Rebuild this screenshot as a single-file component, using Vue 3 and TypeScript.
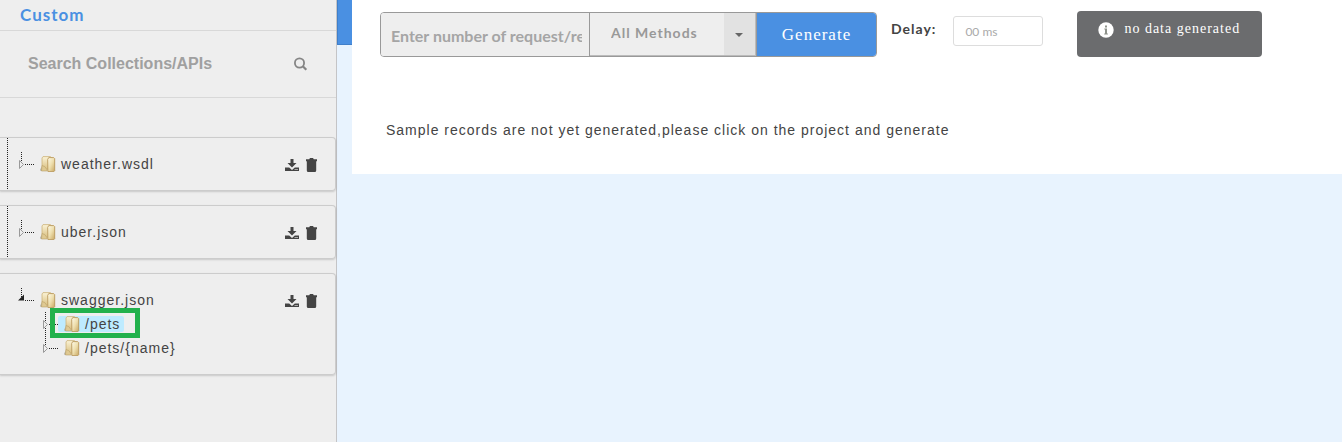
<script setup lang="ts">
import { ref } from 'vue'

interface TreeNode {
  name: string
  selected?: boolean
}

interface Collection {
  name: string
  open: boolean
  children: TreeNode[]
}

const collections: Collection[] = [
  { name: 'weather.wsdl', open: false, children: [] },
  { name: 'uber.json', open: false, children: [] },
  {
    name: 'swagger.json',
    open: true,
    children: [{ name: '/pets', selected: true }, { name: '/pets/{name}' }],
  },
]

const search = ref('')
const count = ref('')
const method = ref('all')
const delay = ref('')
</script>

<template>
  <svg class="defs" aria-hidden="true">
    <defs>
      <linearGradient id="folder-back" x1="0" y1="0" x2="0" y2="1">
        <stop offset="0" stop-color="#fbf3d6" />
        <stop offset="1" stop-color="#d6bb7a" />
      </linearGradient>
      <linearGradient id="folder-front" x1="0" y1="0" x2="1" y2="1">
        <stop offset="0" stop-color="#fffbea" />
        <stop offset="0.5" stop-color="#eedfae" />
        <stop offset="1" stop-color="#c8a662" />
      </linearGradient>
      <symbol id="folder" viewBox="0 0 16 16">
        <path d="M0 13.500l2-3v4.500H.5z" fill="#b9b7b0" />
        <path d="M3 .6h7.500l.8.800v10.800l-9.300 2.300V2z" fill="url(#folder-back)" stroke="#cbb37a" stroke-width=".8" />
        <path d="M2 9.500l2.700 1 2.600 3.500-.4 1H1.500z" fill="#dfc992" stroke="#b99f66" stroke-width=".6" />
        <path d="M7.700 3.400l1-1.800h5l1 1v12.200l-.8.800H7.900z" fill="url(#folder-front)" stroke="#b9975a" stroke-width=".9" />
      </symbol>
      <symbol id="download" viewBox="0 0 14 13">
        <path d="M5.500 0h3v4h3L7 8.500 2.500 4h3z" />
        <path d="M0 8.500h4.200L7 11l2.800-2.500H14v3.500H0z" />
        <path d="M9.500 10.500h3.500" stroke="#aaa" stroke-width="1" />
      </symbol>
      <symbol id="trash" viewBox="0 0 11 14">
        <path d="M0 1.200h3.200L4 0h3l.8 1.200H11v2H10.200V12.500q0 1.500-1.500 1.500H2.300Q.8 14 .8 12.500V3.200H0z" />
      </symbol>
    </defs>
  </svg>

  <div class="app">
    <aside class="sidebar">
      <h2 class="tab">Custom</h2>
      <form class="search" @submit.prevent>
        <input v-model="search" type="text" placeholder="Search Collections/APIs" aria-label="Search Collections/APIs" />
        <button type="submit" aria-label="Search">
          <svg width="14" height="14" viewBox="0 0 14 14" fill="none" stroke="#858585">
            <circle cx="5.500" cy="6" r="4.600" stroke-width="1.800" />
            <path d="M8.800 9.300l3.500 3.500" stroke-width="2.200" />
          </svg>
        </button>
      </form>

      <div class="cards">
        <section v-for="item in collections" :key="item.name" class="card" :class="{ closed: !item.open }">
          <ul class="tree">
            <li>
              <div class="row">
                <svg class="gutter" width="24" height="24" shape-rendering="crispEdges" aria-hidden="true">
                  <path d="M11.500 0V10" class="dots" />
                  <path d="M15 12.500H24" class="dots" />
                  <path v-if="item.open" d="M14 6.500v6H8z" fill="#222" shape-rendering="auto" />
                  <path v-else d="M9.500 8.500v8l4-4z" class="arrow" shape-rendering="auto" />
                </svg>
                <a href="#" class="node">
                  <svg width="16" height="16"><use href="#folder" /></svg>
                  <span>{{ item.name }}</span>
                </a>
              </div>
              <ul v-if="item.children.length" class="tree nested">
                <li v-for="(child, i) in item.children" :key="child.name" class="row">
                  <svg class="gutter" width="24" height="24" shape-rendering="crispEdges" aria-hidden="true">
                    <path :d="i === item.children.length - 1 ? 'M11.500 0V12' : 'M11.500 0V24'" class="dots" />
                    <path d="M15 12.500H24" class="dots" />
                    <path d="M9.500 8.500v8l4-4z" class="arrow" shape-rendering="auto" />
                  </svg>
                  <a href="#" class="node" :class="{ selected: child.selected }">
                    <svg width="16" height="16"><use href="#folder" /></svg>
                    <span>{{ child.name }}</span>
                    <span v-if="child.selected" class="marker"></span>
                  </a>
                </li>
              </ul>
            </li>
          </ul>
          <div class="actions">
            <button type="button" :aria-label="'Download ' + item.name">
              <svg width="14" height="13"><use href="#download" /></svg>
            </button>
            <button type="button" :aria-label="'Delete ' + item.name">
              <svg width="11" height="14"><use href="#trash" /></svg>
            </button>
          </div>
        </section>
      </div>
    </aside>

    <div class="rail"><div class="handle"></div></div>

    <main class="content">
      <div class="panel">
        <form class="toolbar" @submit.prevent>
          <div class="group">
            <input v-model="count" class="count" type="text" placeholder="Enter number of request/response" aria-label="Number of requests" />
            <div class="picker">
              <select v-model="method" aria-label="Method">
                <option value="all">All Methods</option>
              </select>
              <span class="caret"></span>
            </div>
            <button type="submit" class="generate">Generate</button>
          </div>
          <label class="delay-label" for="delay">Delay:</label>
          <input id="delay" v-model="delay" class="delay" type="text" placeholder="00 ms" />
          <div class="status" role="status">
            <svg width="16" height="16" viewBox="0 0 16 16" aria-hidden="true">
              <circle cx="8" cy="8" r="7.700" fill="#fff" />
              <path d="M7 3.500h2v2H7zM6.300 6.500H9v5h.9v1H6.200v-1H7v-4h-.7z" fill="#8f938c" />
            </svg>
            <span>no data generated</span>
          </div>
        </form>
        <p class="empty">Sample records are not yet generated,please click on the project and generate</p>
      </div>
    </main>
  </div>
</template>

<style>
body {
  margin: 0;
  background: #e8f3fe;
}
</style>

<style scoped>
* {
  box-sizing: border-box;
}
.defs {
  position: absolute;
  width: 0;
  height: 0;
}
.app {
  display: flex;
  min-height: 100vh;
  font-family: "Liberation Sans", Arial, sans-serif;
  font-size: 14px;
  letter-spacing: 1px;
  color: #444;
}
button {
  padding: 0;
  border: 0;
  background: none;
  display: flex;
  cursor: pointer;
}
input,
select {
  min-width: 0;
  outline: 0;
}
.sidebar {
  flex: 0 0 337px;
  background: #eee;
  border-right: 1px solid #c4c4c6;
}
.tab {
  margin: 0;
  padding: 0 20px;
  font: bold 17px/30px Lato, sans-serif;
  color: #4a90e2;
  border-bottom: 1px solid #d8d8d8;
}
.search {
  display: flex;
  align-items: center;
  padding: 18px 28px;
  border-bottom: 1px solid #d8d8d8;
}
.search input {
  flex: 1;
  height: 30px;
  padding: 0;
  border: 0;
  background: none;
  font: bold 16px "Liberation Sans", Arial, sans-serif;
}
.search input::placeholder {
  color: #a0a0a0;
}
.cards {
  display: flex;
  flex-direction: column;
  gap: 14px;
  padding-top: 39px;
}
.card {
  display: flex;
  justify-content: space-between;
  align-items: flex-start;
  padding: 14px 18px 14px 10px;
  border: 1px solid #ccc;
  border-left: 0;
  border-radius: 0 4px 4px 0;
  box-shadow: 0 1px 2px rgba(0, 0, 0, 0.16);
}
.card.closed {
  background: repeating-linear-gradient(#222 0 1px, transparent 1px 2px) 7px 0 / 1px 100% no-repeat;
}
.tree {
  margin: 0;
  padding: 0;
  list-style: none;
}
.nested {
  padding-left: 24px;
}
.row {
  display: flex;
  align-items: center;
  height: 24px;
}
.gutter {
  flex: none;
}
.node {
  position: relative;
  display: flex;
  align-items: center;
  gap: 5px;
  height: 16px;
  padding: 0 4px 0 6px;
  line-height: 16px;
  white-space: nowrap;
  color: inherit;
  text-decoration: none;
}
.node.selected {
  background: #beebff;
  border-radius: 2px;
}
.dots {
  stroke: #222;
  stroke-dasharray: 1 1;
}
.arrow {
  fill: #eee;
  stroke: #999;
}
.marker {
  position: absolute;
  inset: -8px -16px -6px -8px;
  border: 5px solid #22b14c;
  pointer-events: none;
}
.actions {
  display: flex;
  align-items: center;
  gap: 7px;
  height: 26px;
  margin-bottom: -2px;
}
.actions svg {
  fill: #444;
}
.rail {
  flex: 0 0 15px;
}
.handle {
  height: 45px;
  background: #4a90e2;
  border: 1px solid #3f7fca;
  border-width: 0 0 1px 1px;
}
.content {
  flex: 1;
  min-width: 0;
}
.panel {
  padding: 11px 28px 34px;
  background: #fff;
}
.toolbar {
  display: flex;
  align-items: flex-start;
}
.group {
  display: flex;
  height: 45px;
  margin: 1px 14px 0 0;
  border: 1px solid #999;
  border-radius: 4px;
  overflow: hidden;
}
.count {
  width: 209px;
  padding: 2px 7px 0 10px;
  border: 0;
  border-right: 1px solid #999;
  background: #eee;
  font: bold 16px Lato, sans-serif;
}
.count::placeholder {
  color: #a5a5a5;
}
.picker {
  position: relative;
  display: flex;
  width: 166px;
  border: 1px solid #bbb;
  border-width: 0 1px 1px 0;
}
.picker select {
  width: 100%;
  padding: 0 40px 3px 21px;
  border: 0;
  border-radius: 0;
  appearance: none;
  background: linear-gradient(#e2e2e2, #e2e2e2) right / 31px 100% no-repeat #eee;
  font: bold 14px Lato, sans-serif;
  letter-spacing: 1px;
  color: #999;
}
.caret {
  position: absolute;
  top: 20px;
  right: 12px;
  border: 4px solid transparent;
  border-top-color: #666;
  border-bottom: 0;
  pointer-events: none;
}
.generate {
  align-items: center;
  justify-content: center;
  width: 120px;
  border-left: 1px solid #999;
  background: #4a90e2;
  color: #fff;
  font: 17px "Liberation Serif", serif;
  letter-spacing: 1px;
}
.delay-label {
  margin-right: 17px;
  font: bold 14px/36px Lato, sans-serif;
}
.delay {
  width: 90px;
  height: 30px;
  margin: 5px 34px 0 0;
  padding: 0 11px;
  border: 1px solid #ddd;
  border-radius: 3px;
  font: 12px Lato, sans-serif;
}
.delay::placeholder {
  color: #aaa;
}
.status {
  display: flex;
  gap: 10px;
  min-width: 185px;
  height: 46px;
  padding: 11px 21px;
  border-radius: 4px;
  background: #6b6c6e;
  color: #fff;
  font: 14px/14px "Liberation Serif", serif;
  white-space: nowrap;
}
.status svg {
  flex: none;
}
.empty {
  margin: 63px 0 0;
  padding: 0 6px;
  line-height: 20px;
}
</style>
